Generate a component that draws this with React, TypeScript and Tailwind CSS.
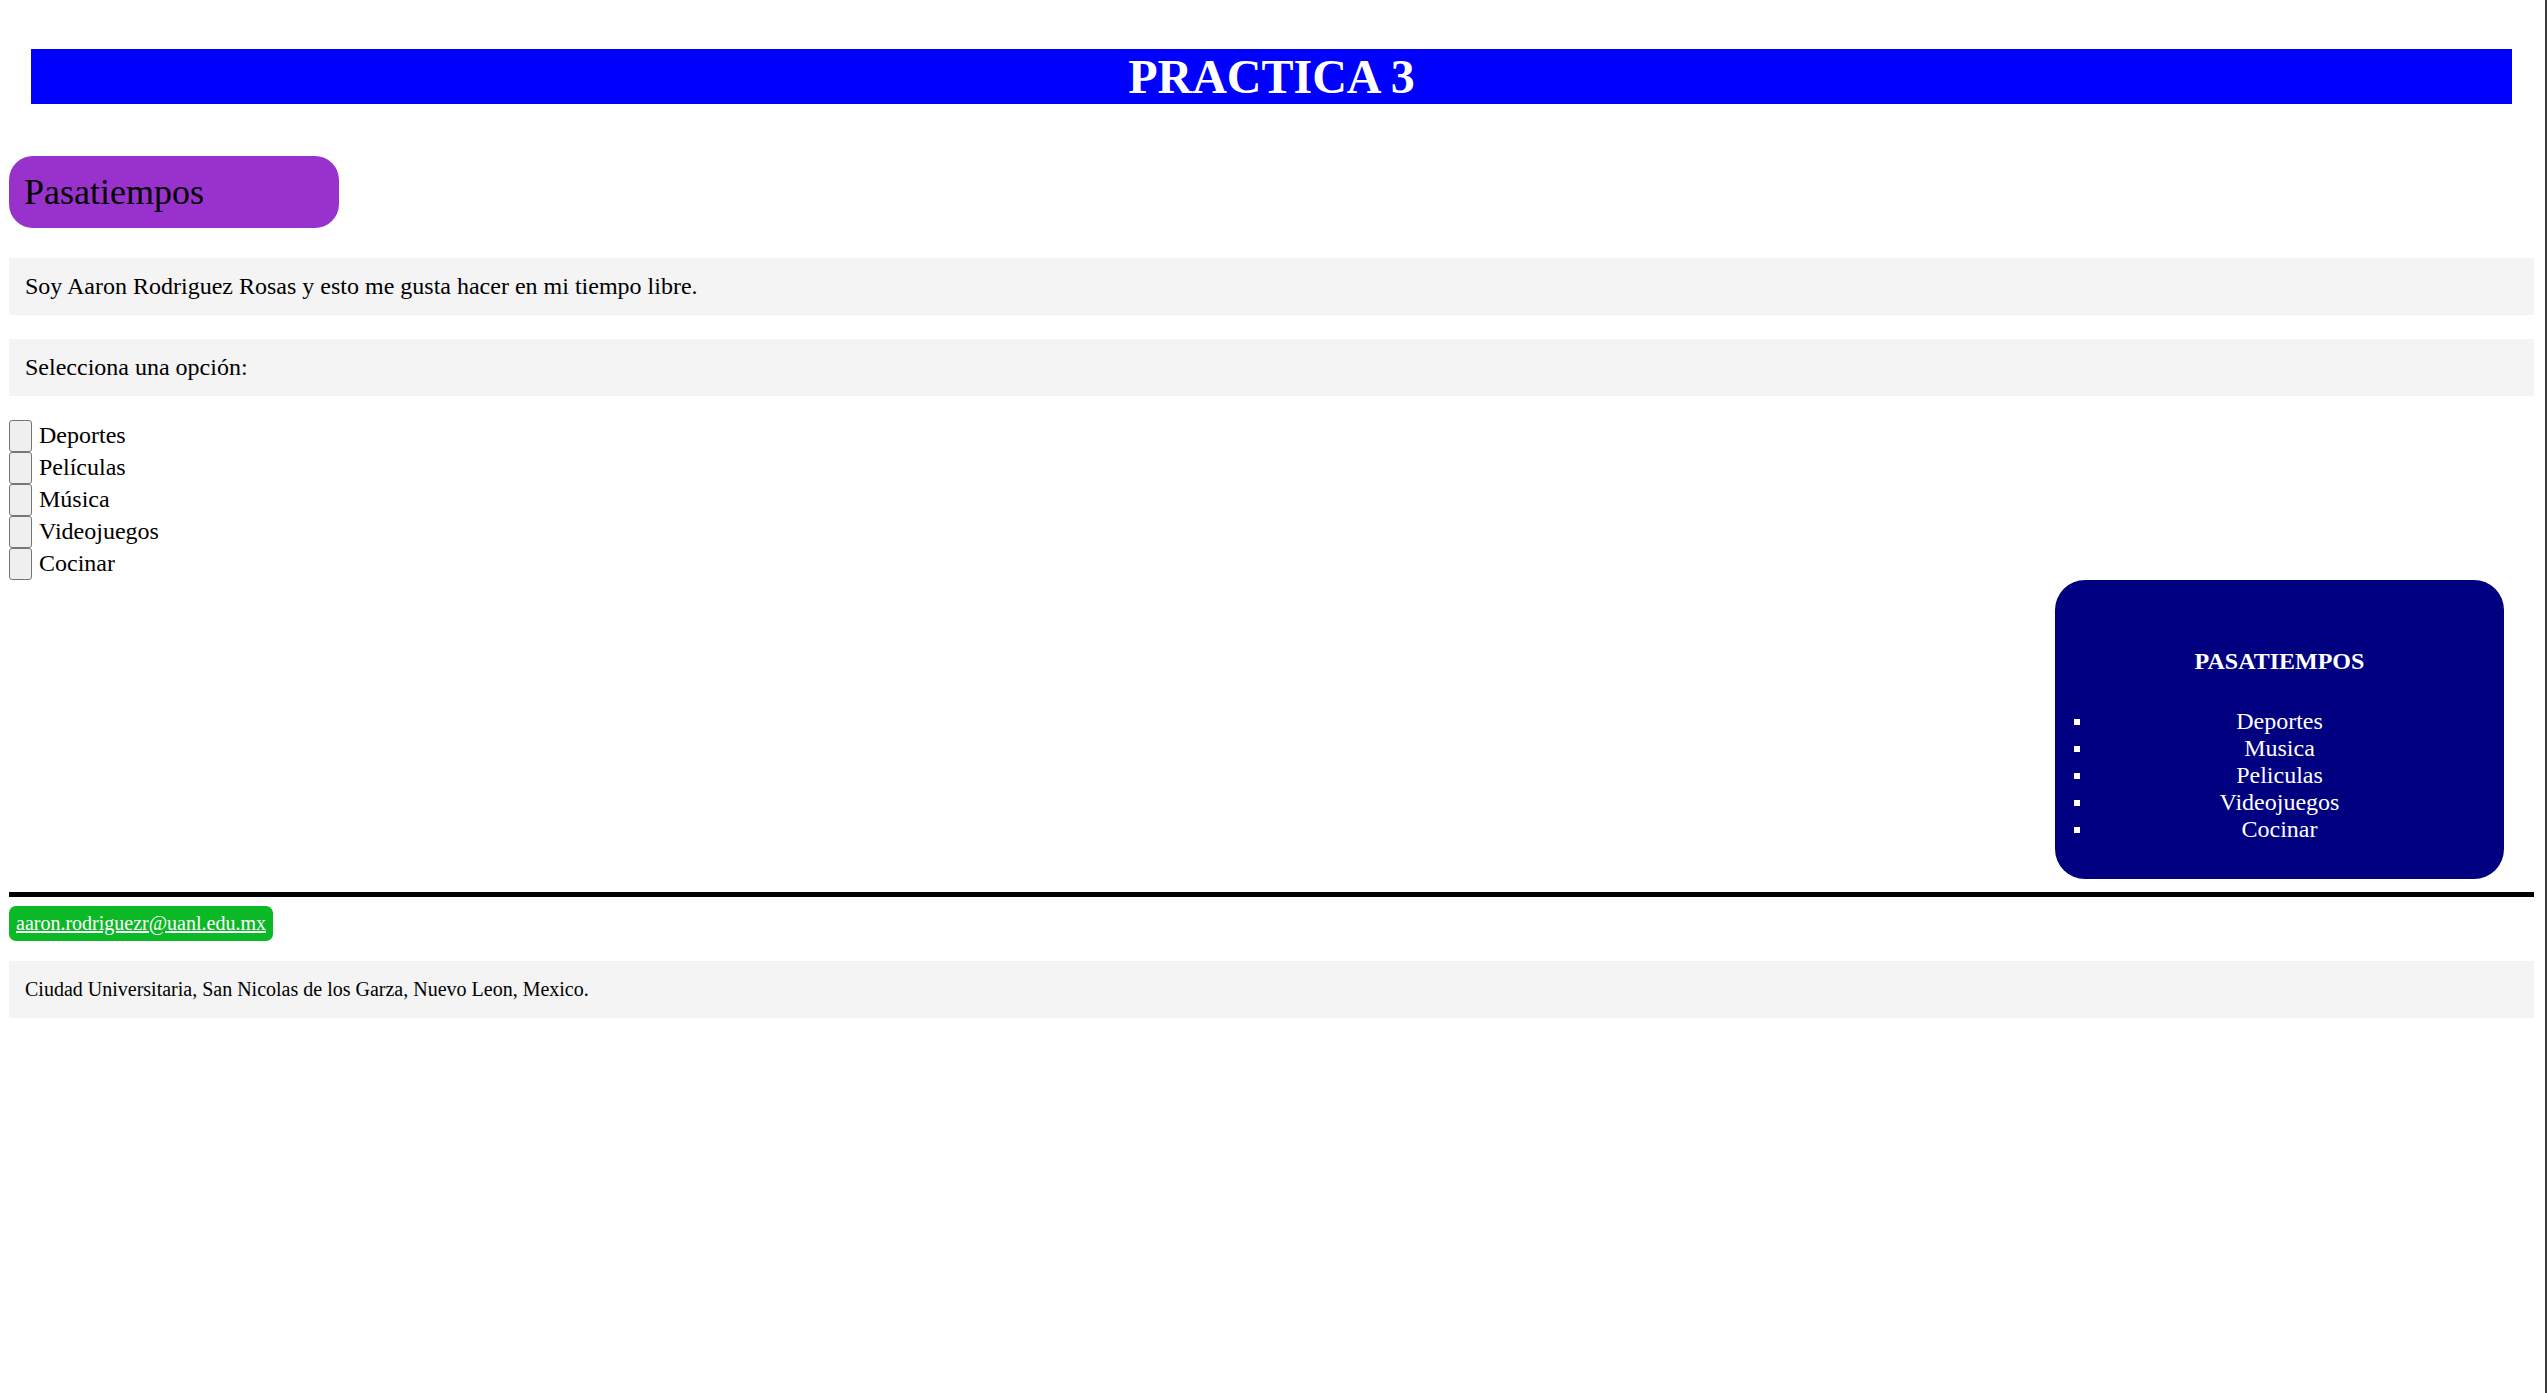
import React from "react";

const options = ["Deportes", "Películas", "Música", "Videojuegos", "Cocinar"];
const hobbies = ["Deportes", "Musica", "Peliculas", "Videojuegos", "Cocinar"];

export default function App() {
  return (
    <div className="flex min-h-[1393px] w-full bg-white font-['Liberation_Serif',serif] text-black">
      <div className="flex-1 min-w-0 pl-[9px] pr-[11px]">
        <h1 className="mt-[49px] mx-[22px] h-[55px] bg-[#0000ff] text-center text-[48px] font-bold leading-[55px] text-white">
          PRACTICA 3
        </h1>

        <div className="mt-[52px] flex h-[72px] w-[330px] items-center rounded-[24px] bg-[#9932cc] pl-[15px]">
          <h2 className="text-[36px] font-normal leading-[41px]">Pasatiempos</h2>
        </div>

        <p className="mt-[30px] bg-[#f4f4f4] px-[16px] py-[15px] text-[24px] leading-[27px]">
          Soy Aaron Rodriguez Rosas y esto me gusta hacer en mi tiempo libre.
        </p>

        <p className="mt-[24px] bg-[#f4f4f4] px-[16px] py-[15px] text-[24px] leading-[27px]">
          Selecciona una opción:
        </p>

        <div className="mt-[24px] flex flex-col">
          {options.map((o) => (
            <label key={o} className="flex h-[32px] items-center gap-[7px] text-[24px] leading-[27.6px]">
              <input
                type="checkbox"
                className="h-[32px] w-[23px] shrink-0 appearance-none rounded-[3px] border-[1.5px] border-[#767676] bg-[#efefef]"
              />
              <span>{o}</span>
            </label>
          ))}
        </div>

        <div className="flex justify-end pr-[30px]">
          <div className="w-[449px] rounded-[30px] bg-[#000080] px-[19px] pb-[36px] pt-[68px] text-white">
            <h4 className="text-center text-[24px] font-bold leading-[27.6px]">PASATIEMPOS</h4>
            <ul className="mt-[32px] flex flex-col">
              {hobbies.map((h) => (
                <li key={h} className="grid grid-cols-[6px_1fr_6px] items-start text-[24px] leading-[27px]">
                  <span className="mt-[11px] block h-[6px] w-[6px] bg-white" />
                  <span className="text-center">{h}</span>
                  <span />
                </li>
              ))}
            </ul>
          </div>
        </div>

        <div className="mt-[13px] h-[5px] bg-black" />

        <div className="mt-[9px] flex h-[35px] w-[264px] items-center rounded-[7px] bg-[#0bb826] px-[7px]">
          <a href="#" className="text-[20px] leading-[23px] text-white underline">
            aaron.rodriguezr@uanl.edu.mx
          </a>
        </div>

        <p className="mt-[20px] bg-[#f4f4f4] px-[16px] py-[17px] text-[20px] leading-[23px]">
          Ciudad Universitaria, San Nicolas de los Garza, Nuevo Leon, Mexico.
        </p>
      </div>
      <div className="w-[2px] shrink-0 bg-[#3c3c3c]" />
    </div>
  );
}
